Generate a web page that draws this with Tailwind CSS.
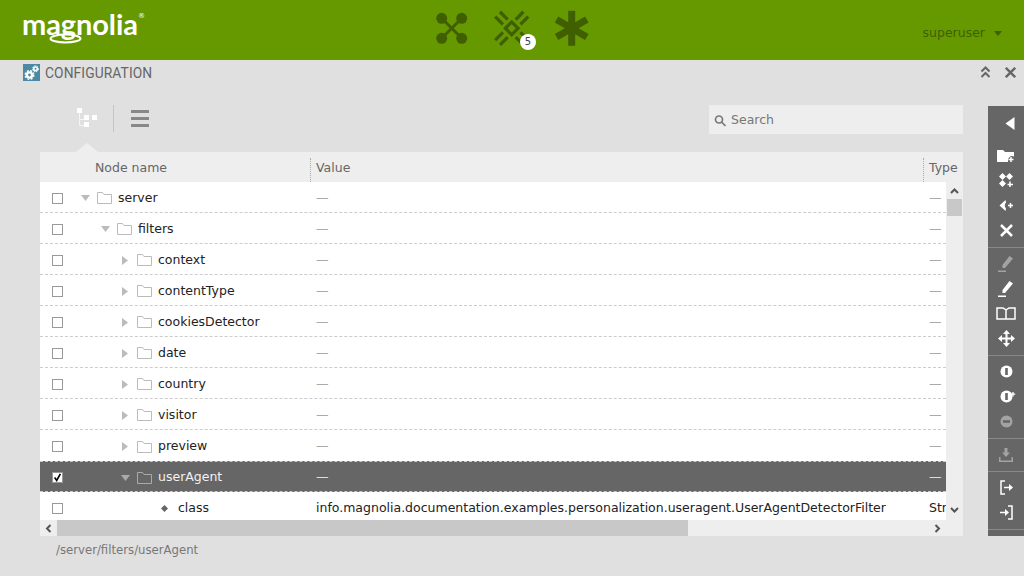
<!doctype html>
<html>
<head>
<meta charset="utf-8">
<script src="https://cdn.jsdelivr.net/npm/@tailwindcss/browser@4"></script>
</head>
<body class="w-[1024px] h-[576px] overflow-hidden bg-[#e0e0e0] font-['DejaVu_Sans',sans-serif] text-[12.5px]">
<header class="h-[60px] bg-[#669900] flex items-center relative">
  <div class="relative ml-[22px] w-[130px] h-[60px]">
    <span class="absolute left-0 top-[7px] font-['Lato',sans-serif] font-bold text-[29px] leading-[34px] tracking-[-0.1px] text-white">magnolia</span>
    <span class="absolute left-[116px] top-[11px] text-[7px] leading-[10px] text-white">®</span>
    <svg class="absolute left-[26px] top-[30px]" width="40" height="16" viewBox="0 0 40 16"><ellipse cx="17.500" cy="8.500" rx="15" ry="4" fill="none" stroke="#fff" stroke-width="2"/></svg>
  </div>
  <div class="absolute left-[430px] top-0 flex">
    <svg width="44" height="60" viewBox="0 0 44 60" fill="#3f5f00" stroke="#3f5f00"><path d="M11.7 18.3L31.7 38.3M31.7 18.3L11.7 38.3" stroke-width="3"/><g stroke="none"><circle cx="11.7" cy="18.3" r="5.5"/><circle cx="31.7" cy="18.3" r="5.5"/><circle cx="11.7" cy="38.3" r="5.5"/><circle cx="31.7" cy="38.3" r="5.5"/></g></svg>
    <div class="relative w-[75px] h-[60px]">
      <svg class="absolute left-0 top-0" width="75" height="60" viewBox="0 0 75 60"><g transform="translate(37.7 28.3) rotate(45)" fill="none" stroke="#3f5f00" stroke-width="3.200"><rect x="-4.500" y="-4.500" width="9" height="9"/><path d="M-20-3.400H-9M-20 3.400H-9M9-3.400H20M9 3.400H20M-3.400-20V-9M3.400-20V-9M-3.400 9V20M3.400 9V20"/></g></svg>
      <div class="absolute left-[46px] top-[34px] w-[16px] h-[16px] rounded-full bg-white text-[#444] text-[10px] leading-[16px] text-center">5</div>
    </div>
    <svg width="60" height="60" viewBox="0 0 60 60" fill="#3f5f00"><g transform="translate(22.7 28.3)"><rect x="-3.500" y="-17.500" width="7" height="35"/><rect x="-3.500" y="-17.500" width="7" height="35" transform="rotate(60)"/><rect x="-3.500" y="-17.500" width="7" height="35" transform="rotate(-60)"/></g></svg>
  </div>
  <div class="ml-auto mr-[22px] flex items-center gap-[9px] text-[#3f5f00] mt-[7px]">
    <span>superuser</span>
    <svg width="8" height="5" viewBox="0 0 8 5" fill="#3f5f00"><path d="M0 0H8L4 5Z"/></svg>
  </div>
</header>

<div class="h-[45px] flex items-start pt-[4px] pl-[23px] pr-[8px]">
  <svg width="17" height="17" viewBox="0 0 17 17"><rect width="17" height="17" fill="#4b8aa3"/><g fill="none" stroke="#fff"><circle cx="6.500" cy="11" r="2.600" stroke-width="2.400"/><circle cx="6.500" cy="11" r="4.300" stroke-width="1.400" stroke-dasharray="2 1.400"/><circle cx="12.500" cy="4.800" r="1.800" stroke-width="1.600"/><circle cx="12.500" cy="4.800" r="3" stroke-width="1" stroke-dasharray="1.500 1"/></g></svg>
  <span class="ml-[5px] mt-[1px] font-['Roboto',sans-serif] text-[13.8px] leading-[17px] tracking-[0.1px] text-[#666]">CONFIGURATION</span>
  <div class="ml-auto flex items-center gap-[14px] mt-[2px]">
    <svg width="11" height="12" viewBox="0 0 11 12" fill="none" stroke="#666" stroke-width="2"><path d="M1.500 5.500L5.500 1.500L9.500 5.500M1.500 11L5.500 7L9.500 11"/></svg>
    <svg width="11" height="11" viewBox="0 0 11 11" fill="none" stroke="#666" stroke-width="2.400"><path d="M.8.8L10.2 10.2M10.2.8L.8 10.2"/></svg>
  </div>
</div>

<div class="flex h-[471px] pl-[40px]">
  <div class="w-[923px] flex flex-col">
    <div class="h-[47px] flex items-start relative">
      <svg class="ml-[37px] mt-[3px]" width="21" height="21" viewBox="0 0 21 21"><path d="M2.500 5V17.500H8M2.500 11.500H8" stroke="#f4f4f4" fill="none"/><g fill="#fff"><rect width="5" height="5"/><rect x="7" y="7" width="5" height="5"/><rect x="15" y="7" width="5" height="5"/><rect x="7" y="14" width="5" height="5"/></g></svg>
      <div class="ml-[15px] w-px h-[27px] bg-[#c4c4c4]"></div>
      <div class="ml-[17px] mt-[5px] w-[18px] flex flex-col gap-[4px]"><div class="h-[3px] bg-[#888]"></div><div class="h-[3px] bg-[#888]"></div><div class="h-[3px] bg-[#888]"></div></div>
      <div class="absolute left-[669px] top-0 w-[254px] h-[29px] pt-[2px] bg-[#eeeeee] flex items-center pl-[5px] gap-[4px] text-[#777]">
        <svg width="13" height="13" viewBox="0 0 13 13" fill="none" stroke="#777" stroke-width="1.700"><circle cx="5" cy="5.500" r="3.500"/><path d="M7.500 8L11.500 12"/></svg>
        <span>Search</span>
      </div>
      <svg class="absolute left-[36px] bottom-0" width="22" height="9" viewBox="0 0 22 9" fill="#eeeeee"><path d="M0 9L11 0L22 9Z"/></svg>
    </div>
    <div class="h-[30px] bg-[#eeeeee] flex items-end text-[#666] relative">
      <span class="ml-[55px] w-[215px] h-[30px] leading-[31px]">Node name</span>
      <div class="h-[24px] border-l border-dotted border-[#aaa]"></div>
      <span class="ml-[5px] w-[607px] h-[30px] leading-[31px]">Value</span>
      <div class="h-[24px] border-l border-dotted border-[#aaa]"></div>
      <span class="ml-[5px] h-[30px] leading-[31px]">Type</span>
    </div>
    <div class="h-[354px] flex bg-[#eeeeee]">
      <div class="w-[906px] flex flex-col">
        <div class="h-[338px] bg-white overflow-hidden text-[#222]">

          <div class="h-[31px] pt-[2px] flex items-center border-b border-dashed border-[#ccc]"><div class="ml-[12px] w-[11px] h-[11px] border border-[#999] shrink-0"></div><div class="w-[253px] pl-[18px] flex items-center shrink-0"><svg class="mr-[7px]" width="9" height="6" viewBox="0 0 9 6" fill="#bbb"><path d="M0 0H9L4.500 6Z"/></svg><svg class="mr-[6px]" width="15" height="12" viewBox="0 0 15 12" fill="none" stroke="#bbb"><path d="M.5 11.500V.5H5.500L7 2.500H14.500V11.500Z"/></svg><span>server</span></div><span class="w-[613px] text-[#aaa] shrink-0">—</span><span class="text-[#aaa]">—</span></div>

          <div class="h-[31px] pt-[2px] flex items-center border-b border-dashed border-[#ccc]"><div class="ml-[12px] w-[11px] h-[11px] border border-[#999] shrink-0"></div><div class="w-[253px] pl-[38px] flex items-center shrink-0"><svg class="mr-[7px]" width="9" height="6" viewBox="0 0 9 6" fill="#bbb"><path d="M0 0H9L4.500 6Z"/></svg><svg class="mr-[6px]" width="15" height="12" viewBox="0 0 15 12" fill="none" stroke="#bbb"><path d="M.5 11.500V.5H5.500L7 2.500H14.500V11.500Z"/></svg><span>filters</span></div><span class="w-[613px] text-[#aaa] shrink-0">—</span><span class="text-[#aaa]">—</span></div>

          <div class="h-[31px] pt-[2px] flex items-center border-b border-dashed border-[#ccc]"><div class="ml-[12px] w-[11px] h-[11px] border border-[#999] shrink-0"></div><div class="w-[253px] pl-[59px] flex items-center shrink-0"><svg class="mr-[9px]" width="6" height="9" viewBox="0 0 6 9" fill="#bbb"><path d="M0 0L6 4.500L0 9Z"/></svg><svg class="mr-[6px]" width="15" height="12" viewBox="0 0 15 12" fill="none" stroke="#bbb"><path d="M.5 11.500V.5H5.500L7 2.500H14.500V11.500Z"/></svg><span>context</span></div><span class="w-[613px] text-[#aaa] shrink-0">—</span><span class="text-[#aaa]">—</span></div>

          <div class="h-[31px] pt-[2px] flex items-center border-b border-dashed border-[#ccc]"><div class="ml-[12px] w-[11px] h-[11px] border border-[#999] shrink-0"></div><div class="w-[253px] pl-[59px] flex items-center shrink-0"><svg class="mr-[9px]" width="6" height="9" viewBox="0 0 6 9" fill="#bbb"><path d="M0 0L6 4.500L0 9Z"/></svg><svg class="mr-[6px]" width="15" height="12" viewBox="0 0 15 12" fill="none" stroke="#bbb"><path d="M.5 11.500V.5H5.500L7 2.500H14.500V11.500Z"/></svg><span>contentType</span></div><span class="w-[613px] text-[#aaa] shrink-0">—</span><span class="text-[#aaa]">—</span></div>

          <div class="h-[31px] pt-[2px] flex items-center border-b border-dashed border-[#ccc]"><div class="ml-[12px] w-[11px] h-[11px] border border-[#999] shrink-0"></div><div class="w-[253px] pl-[59px] flex items-center shrink-0"><svg class="mr-[9px]" width="6" height="9" viewBox="0 0 6 9" fill="#bbb"><path d="M0 0L6 4.500L0 9Z"/></svg><svg class="mr-[6px]" width="15" height="12" viewBox="0 0 15 12" fill="none" stroke="#bbb"><path d="M.5 11.500V.5H5.500L7 2.500H14.500V11.500Z"/></svg><span>cookiesDetector</span></div><span class="w-[613px] text-[#aaa] shrink-0">—</span><span class="text-[#aaa]">—</span></div>

          <div class="h-[31px] pt-[2px] flex items-center border-b border-dashed border-[#ccc]"><div class="ml-[12px] w-[11px] h-[11px] border border-[#999] shrink-0"></div><div class="w-[253px] pl-[59px] flex items-center shrink-0"><svg class="mr-[9px]" width="6" height="9" viewBox="0 0 6 9" fill="#bbb"><path d="M0 0L6 4.500L0 9Z"/></svg><svg class="mr-[6px]" width="15" height="12" viewBox="0 0 15 12" fill="none" stroke="#bbb"><path d="M.5 11.500V.5H5.500L7 2.500H14.500V11.500Z"/></svg><span>date</span></div><span class="w-[613px] text-[#aaa] shrink-0">—</span><span class="text-[#aaa]">—</span></div>

          <div class="h-[31px] pt-[2px] flex items-center border-b border-dashed border-[#ccc]"><div class="ml-[12px] w-[11px] h-[11px] border border-[#999] shrink-0"></div><div class="w-[253px] pl-[59px] flex items-center shrink-0"><svg class="mr-[9px]" width="6" height="9" viewBox="0 0 6 9" fill="#bbb"><path d="M0 0L6 4.500L0 9Z"/></svg><svg class="mr-[6px]" width="15" height="12" viewBox="0 0 15 12" fill="none" stroke="#bbb"><path d="M.5 11.500V.5H5.500L7 2.500H14.500V11.500Z"/></svg><span>country</span></div><span class="w-[613px] text-[#aaa] shrink-0">—</span><span class="text-[#aaa]">—</span></div>

          <div class="h-[31px] pt-[2px] flex items-center border-b border-dashed border-[#ccc]"><div class="ml-[12px] w-[11px] h-[11px] border border-[#999] shrink-0"></div><div class="w-[253px] pl-[59px] flex items-center shrink-0"><svg class="mr-[9px]" width="6" height="9" viewBox="0 0 6 9" fill="#bbb"><path d="M0 0L6 4.500L0 9Z"/></svg><svg class="mr-[6px]" width="15" height="12" viewBox="0 0 15 12" fill="none" stroke="#bbb"><path d="M.5 11.500V.5H5.500L7 2.500H14.500V11.500Z"/></svg><span>visitor</span></div><span class="w-[613px] text-[#aaa] shrink-0">—</span><span class="text-[#aaa]">—</span></div>

          <div class="h-[31px] pt-[2px] flex items-center"><div class="ml-[12px] w-[11px] h-[11px] border border-[#999] shrink-0"></div><div class="w-[253px] pl-[59px] flex items-center shrink-0"><svg class="mr-[9px]" width="6" height="9" viewBox="0 0 6 9" fill="#bbb"><path d="M0 0L6 4.500L0 9Z"/></svg><svg class="mr-[6px]" width="15" height="12" viewBox="0 0 15 12" fill="none" stroke="#bbb"><path d="M.5 11.500V.5H5.500L7 2.500H14.500V11.500Z"/></svg><span>preview</span></div><span class="w-[613px] text-[#aaa] shrink-0">—</span><span class="text-[#aaa]">—</span></div>

          <div class="h-[31px] pt-[2px] flex items-center bg-[#666] border-y border-dashed border-[#ccc] text-[#f2f2f2]"><div class="ml-[12px] w-[11px] h-[11px] border border-[#999] bg-white shrink-0 flex items-center justify-center"><svg width="11" height="11" viewBox="0 0 11 11" fill="none" stroke="#000" stroke-width="2"><path d="M2 5.500L4.500 9L9 1"/></svg></div><div class="w-[253px] pl-[58px] flex items-center shrink-0"><svg class="mr-[7px]" width="9" height="6" viewBox="0 0 9 6" fill="#aaa"><path d="M0 0H9L4.500 6Z"/></svg><svg class="mr-[6px]" width="15" height="12" viewBox="0 0 15 12" fill="none" stroke="#aaa"><path d="M.5 11.500V.5H5.500L7 2.500H14.500V11.500Z"/></svg><span>userAgent</span></div><span class="w-[613px] text-[#ddd] shrink-0">—</span><span class="text-[#ddd]">—</span></div>

          <div class="h-[28px] pt-[4px] flex items-center"><div class="ml-[12px] w-[11px] h-[11px] border border-[#999] shrink-0"></div><div class="w-[253px] pl-[98px] flex items-center shrink-0"><svg class="mr-[10px]" width="7" height="7" viewBox="0 0 7 7" fill="#666"><path d="M3.500 0L7 3.500L3.500 7L0 3.500Z"/></svg><span>class</span></div><span class="w-[613px] shrink-0 whitespace-nowrap">info.magnolia.documentation.examples.personalization.useragent.UserAgentDetectorFilter</span><span class="w-[17px] overflow-hidden">String</span></div>

        </div>
        <div class="h-[16px] flex items-center bg-[#eeeeee]">
          <svg class="ml-[5px]" width="7" height="9" viewBox="0 0 7 9" fill="none" stroke="#555" stroke-width="2"><path d="M5.500 1L2 4.500L5.500 8"/></svg>
          <div class="ml-[5px] w-[631px] h-[16px] bg-[#c8c8c8]"></div>
          <svg class="ml-[246px]" width="7" height="9" viewBox="0 0 7 9" fill="none" stroke="#555" stroke-width="2"><path d="M1.500 1L5 4.500L1.500 8"/></svg>
        </div>
      </div>
      <div class="w-[17px] flex flex-col items-center">
        <svg class="mt-[6px]" width="9" height="6" viewBox="0 0 9 6" fill="none" stroke="#555" stroke-width="2"><path d="M1 5L4.500 1.500L8 5"/></svg>
        <div class="mt-[5px] w-[15px] h-[17px] bg-[#c8c8c8]"></div>
        <svg class="mt-[291px]" width="9" height="6" viewBox="0 0 9 6" fill="none" stroke="#555" stroke-width="2"><path d="M1 1L4.500 4.500L8 1"/></svg>
      </div>
    </div>
    <div class="pl-[16px] pt-[7px] text-[11.7px] text-[#777] leading-[14px]">/server/filters/userAgent</div>
  </div>

  <aside class="ml-[25px] w-[36px] h-[430px] mt-[1px] bg-[#666] flex flex-col text-white">
    <div class="h-[142px] pt-[5px] border-b border-[#888] flex flex-col items-center">
      <div class="h-[25px] flex items-center"><svg class="ml-[8px]" width="10" height="13" viewBox="0 0 10 13" fill="#fff"><path d="M9.500 0V13L.5 6.500Z"/></svg></div>
      <div class="h-[25px] flex items-center mt-[7px]"><svg width="18" height="14" viewBox="0 0 18 14" fill="#fff"><path d="M0 1H6L8 3H17V7.500A4.500 4.500 0 0 0 11 13H0Z"/><path d="M14 8V13M11.500 10.500H16.500" stroke="#fff" stroke-width="1.500"/></svg></div>
      <div class="h-[25px] flex items-center"><svg width="15" height="15" viewBox="0 0 15 15" fill="#fff"><path d="M3.500 0L7 3.500L3.500 7L0 3.500ZM10.500 0L14 3.500L10.500 7L7 3.500ZM3.500 7L7 10.500L3.500 14L0 10.500Z"/><path d="M11 8.500V14M8.500 11.500H14" stroke="#fff" stroke-width="1.500"/></svg></div>
      <div class="h-[25px] flex items-center"><svg width="14" height="11" viewBox="0 0 14 11" fill="#fff"><path d="M6.500 0L.5 5.500L6.500 11L7 8.500Q4.500 5.500 7 2.500Z"/><path d="M9 5.500H14M11.500 3V8" stroke="#fff" stroke-width="1.500"/></svg></div>
      <div class="h-[25px] flex items-center"><svg width="13" height="13" viewBox="0 0 13 13" fill="none" stroke="#fff" stroke-width="2.500"><path d="M1 1L12 12M12 1L1 12"/></svg></div>
    </div>
    <div class="h-[108px] pt-[3px] border-b border-[#888] flex flex-col items-center">
      <div class="h-[25px] flex items-center opacity-40"><svg width="16" height="16" viewBox="0 0 16 16" fill="#fff"><path d="M11.500 0L15 2.500L7 12H4.500V9ZM0 14.500H8V16H0Z"/></svg></div>
      <div class="h-[25px] flex items-center"><svg width="16" height="16" viewBox="0 0 16 16" fill="#fff"><path d="M11.500 0L15 2.500L7 12H4.500V9ZM0 14.500H8V16H0Z"/></svg></div>
      <div class="h-[25px] flex items-center"><svg width="20" height="13" viewBox="0 0 20 13" fill="none" stroke="#fff" stroke-width="1.500"><path d="M10 12V3L7 1H1V12ZM10 12H19V1H13L10 3"/></svg></div>
      <div class="h-[25px] flex items-center"><svg width="17" height="17" viewBox="0 0 17 17" fill="#fff"><path d="M8.500 0L12 4H9.500V7.500H13V5L17 8.500L13 12V9.500H9.500V13H12L8.500 17L5 13H7.500V9.500H4V12L0 8.500L4 5V7.500H7.500V4H5Z"/></svg></div>
    </div>
    <div class="h-[83px] pt-[3px] border-b border-[#888] flex flex-col items-center">
      <div class="h-[25px] flex items-center"><svg width="13" height="13" viewBox="0 0 13 13"><circle cx="6.500" cy="6.500" r="6" fill="#fff"/><rect x="5.200" y="3" width="2.600" height="7" fill="#666"/></svg></div>
      <div class="h-[25px] flex items-center ml-[3px]"><svg width="16" height="13" viewBox="0 0 16 13"><circle cx="6.500" cy="6.500" r="6" fill="#fff"/><rect x="5.200" y="3" width="2.600" height="7" fill="#666"/><path d="M13 2V6.500M10.800 4.200H15.200" stroke="#fff" stroke-width="1.300"/></svg></div>
      <div class="h-[25px] flex items-center opacity-40"><svg width="13" height="13" viewBox="0 0 13 13"><circle cx="6.500" cy="6.500" r="6" fill="#fff"/><rect x="3" y="5.200" width="7" height="2.600" fill="#666"/></svg></div>
    </div>
    <div class="h-[33px] border-b border-[#888] flex items-center justify-center">
      <svg class="opacity-40" width="14" height="14" viewBox="0 0 14 14" fill="#fff"><path d="M5.500 0H8.500V4.500H11L7 9L3 4.500H5.500ZM0 9H1.500V12.500H12.500V9H14V14H0Z"/></svg>
    </div>
    <div class="h-[58px] pt-[3px] border-b border-[#888] flex flex-col items-center">
      <div class="h-[25px] flex items-center"><svg width="13" height="15" viewBox="0 0 13 15" fill="none" stroke="#fff" stroke-width="1.500"><path d="M5 1H1V14H5M4 7.500H12"/><path d="M9 4L13 7.500L9 11Z" fill="#fff" stroke="none"/></svg></div>
      <div class="h-[25px] flex items-center"><svg width="13" height="15" viewBox="0 0 13 15" fill="none" stroke="#fff" stroke-width="1.500"><path d="M8 1H12V14H8M0 7.500H7"/><path d="M5 4L9 7.500L5 11Z" fill="#fff" stroke="none"/></svg></div>
    </div>
  </aside>
</div>
</body>
</html>
